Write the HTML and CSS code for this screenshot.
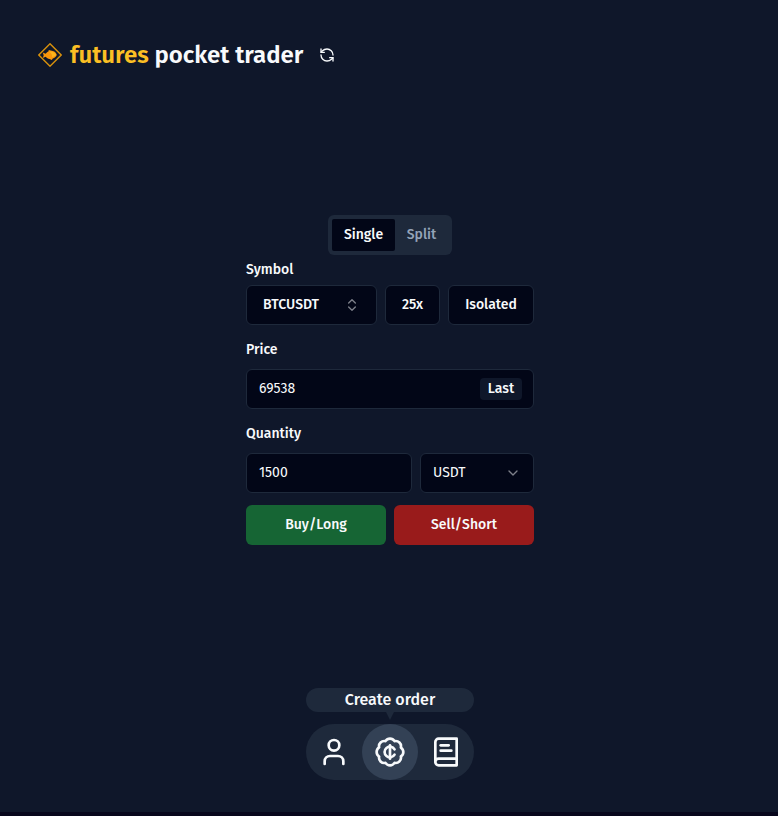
FILE: index.html
```html
<!DOCTYPE html>
<html lang="en">
<head>
<meta charset="utf-8">
<title>futures pocket trader</title>
<link rel="stylesheet" href="styles.css">
</head>
<body>
<div class="app">
  <header class="header">
    <svg class="logo" viewBox="0 0 24 24" fill="none">
      <path d="M12 .8 23.2 12 12 23.2.8 12Z" stroke="#d9920c" stroke-width="1.4"/>
      <path d="M4.8 9.5 7.6 10.8C8.6 9.6 9.6 9 10.4 8.6L10.8 7l4 1c2.2.6 3.6 2.2 4 4-.8 1.900-2.200 3-4 3.600L13.800 17l-2.300-1c-1.500-.3-2.800-1-3.900-2.200L4.800 15l.9-2.800Z" fill="#f9960c"/>
      <path d="M11 8.500c3-.3 6 .8 7.200 3.300-1 1.500-2.400 2-4.200 2.100.4-2-.8-3.900-3-5.400Z" fill="#fdb41b"/>
    </svg>
    <h1 class="title"><span class="accent">futures</span> pocket trader</h1>
    <button class="refresh" aria-label="Refresh"><svg class="icon" viewBox="0 0 24 24"><path d="M21 12a9 9 0 0 0-9-9 9.75 9.75 0 0 0-6.74 2.74L3 8"/><path d="M3 3v5h5"/><path d="M3 12a9 9 0 0 0 9 9 9.75 9.75 0 0 0 6.74-2.74L21 16"/><path d="M16 16h5v5"/></svg></button>
  </header>
  <main class="order">
    <div class="tabs">
      <button class="tab active">Single</button>
      <button class="tab">Split</button>
    </div>
    <label class="label l-symbol">Symbol</label>
    <div class="row">
      <button class="box symbol"><span>BTCUSDT</span><svg class="icon dim" viewBox="0 0 24 24"><path d="m7 15 5 5 5-5"/><path d="m7 9 5-5 5 5"/></svg></button>
      <button class="box leverage">25x</button>
      <button class="box margin">Isolated</button>
    </div>
    <label class="label l-price">Price</label>
    <div class="box field"><span>69538</span><button class="last">Last</button></div>
    <label class="label l-qty">Quantity</label>
    <div class="row">
      <div class="box field qty"><span>1500</span></div>
      <div class="box field unit"><span>USDT</span><svg class="icon dim" viewBox="0 0 24 24"><path d="m6 9 6 6 6-6"/></svg></div>
    </div>
    <div class="row actions">
      <button class="action buy">Buy/Long</button>
      <button class="action sell">Sell/Short</button>
    </div>
  </main>
  <footer class="dock">
    <div class="hint">Create order</div>
    <nav class="nav">
      <button class="nav-item" aria-label="Account"><svg class="icon" viewBox="0 0 24 24"><path d="M19 21v-2a4 4 0 0 0-4-4H9a4 4 0 0 0-4 4v2"/><circle cx="12" cy="7" r="4"/></svg></button>
      <button class="nav-item current" aria-label="Create order"><svg class="icon" viewBox="0 0 24 24"><path d="M3.85 8.62a4 4 0 0 1 4.78-4.77 4 4 0 0 1 6.74 0 4 4 0 0 1 4.78 4.78 4 4 0 0 1 0 6.74 4 4 0 0 1-4.77 4.78 4 4 0 0 1-6.75 0 4 4 0 0 1-4.78-4.77 4 4 0 0 1 0-6.76Z"/><path d="M12 7v10"/><path d="M15.4 10a4 4 0 1 0 0 4"/></svg></button>
      <button class="nav-item" aria-label="Orders"><svg class="icon" viewBox="0 0 24 24"><path d="M4 19.5v-15A2.5 2.5 0 0 1 6.5 2H20v20H6.5a2.5 2.5 0 0 1 0-5H20"/><path d="M8 7h6"/><path d="M8 11h8"/></svg></button>
    </nav>
  </footer>
</div>
</body>
</html>
```
FILE: styles.css
```css
* { box-sizing: border-box; margin: 0; }
body {
  height: 816px;
  overflow: hidden;
  background: #07061c;
  color: #f8fafc;
  font: 500 14px/20px "Fira Sans", "Noto Sans", sans-serif;
}
button { border: 0; padding: 0; background: none; color: inherit; font: inherit; }
.app { display: flex; flex-direction: column; height: 812px; background: #0f172a; }
.icon { display: block; width: 16px; height: 16px; fill: none; stroke: currentColor; stroke-width: 2; stroke-linecap: round; stroke-linejoin: round; }
.dim { opacity: .5; }

.header { display: flex; align-items: center; height: 110px; padding-left: 38px; }
.logo { width: 24px; height: 24px; margin-right: 8px; }
.title { width: 234px; font-size: 24px; line-height: 32px; font-weight: 600; white-space: nowrap; }
.accent { color: #fbbf24; }
.refresh { margin-left: 15px; }

.order { display: flex; flex-direction: column; width: 288px; margin: 105px 0 0 246px; }
.tabs { display: flex; align-self: center; width: 124px; height: 40px; padding: 4px; border-radius: 6px; background: #1e293b; }
.tab { width: 63px; border-radius: 2px; color: #94a3b8; text-align: center; }
.tab + .tab { width: 53px; }
.tab.active { background: #020617; color: #f8fafc; }
.label { height: 20px; margin: 5px 0; }
.l-price, .l-qty { margin: 15px 0 9px; }
.row { display: flex; gap: 8px; }
.box { height: 40px; border: 1px solid #1e293b; border-radius: 6px; background: #020617; }
.symbol { display: flex; align-items: center; justify-content: space-between; width: 131px; padding: 0 16px; }
.leverage { width: 55px; }
.margin { width: 86px; }
.field { display: flex; align-items: center; justify-content: space-between; padding: 0 11px 0 12px; font-weight: 400; }
.last { width: 42px; height: 22px; border-radius: 4px; background: #0f172a; font-weight: 500; }
.qty { width: 166px; }
.unit { width: 114px; padding-right: 12px; }
.actions { margin-top: 12px; }
.action { width: 140px; height: 40px; border-radius: 6px; }
.buy { background: #166534; }
.sell { background: #991b1b; }

.dock { width: 168px; margin: 143px 0 0 306px; }
.hint { position: relative; height: 24px; border-radius: 12px; background: #1e293b; font-size: 16px; line-height: 24px; text-align: center; }
.hint::after { content: ""; position: absolute; top: 24px; left: 80px; border: 4px solid transparent; border-top: 8px solid #1e293b; border-bottom: 0; }
.nav { display: flex; height: 56px; margin-top: 12px; border-radius: 28px; background: #1e293b; }
.nav-item { display: grid; place-items: center; width: 56px; height: 56px; border-radius: 50%; }
.nav-item .icon { width: 32px; height: 32px; }
.current { background: #334155; }
```
